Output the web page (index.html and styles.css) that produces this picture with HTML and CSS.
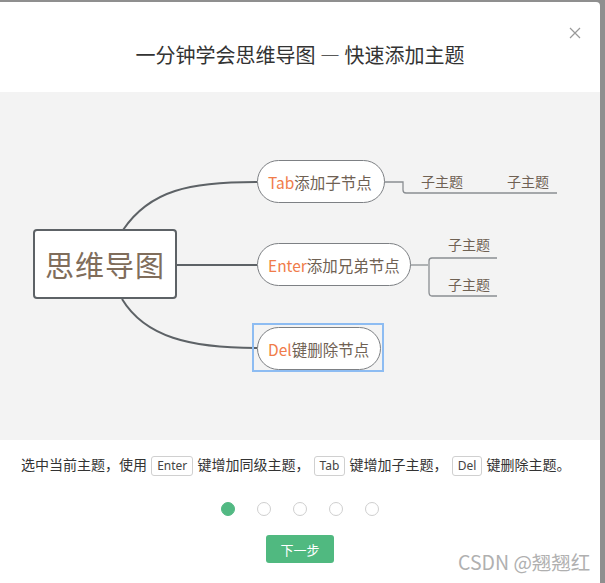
FILE: index.html
```html
<!DOCTYPE html>
<html lang="zh">
<head>
<meta charset="utf-8">
<link rel="stylesheet" href="styles.css">
</head>
<body>
<div class="dialog">
  <div class="header">
    <h1 class="title">一分钟学会思维导图 — 快速添加主题</h1>
    <span class="close">
      <svg width="12" height="12" viewBox="0 0 12 12"><path d="M1 1L11 11M11 1L1 11" stroke="#999" stroke-width="1.2" fill="none"/></svg>
    </span>
  </div>
  <div class="stage">
    <svg class="links" width="600" height="348" viewBox="0 0 600 348">
      <g fill="none" stroke="#5d6266" stroke-width="2">
        <path d="M123 138 C 150 98, 190 90, 257 90"/>
        <path d="M177 173 L257 173"/>
        <path d="M122 207 C 145 245, 190 256, 257 256"/>
      </g>
      <g fill="none" stroke="#8a8e92" stroke-width="1.3">
        <path d="M384 90 L403 90 L403 98 Q403 101 406 101 L557 101"/>
        <path d="M410 173 L428 173"/>
        <path d="M497 166 L432 166 Q429 166 429 169 L429 200 Q429 204 432 204 L497 204"/>
      </g>
    </svg>
    <div class="root">思维导图</div>
    <div class="node n1"><span class="key">Tab</span>添加子节点</div>
    <div class="node n2"><span class="key">Enter</span>添加兄弟节点</div>
    <div class="sel"></div>
    <div class="node n3"><span class="key">Del</span>键删除节点</div>
    <div class="sub s1">子主题</div>
    <div class="sub s2">子主题</div>
    <div class="sub s3">子主题</div>
    <div class="sub s4">子主题</div>
  </div>
  <p class="desc">选中当前主题，使用 <kbd>Enter</kbd> 键增加同级主题， <kbd>Tab</kbd> 键增加子主题， <kbd>Del</kbd> 键删除主题。</p>
  <div class="dots">
    <span class="dot active"></span><span class="dot"></span><span class="dot"></span><span class="dot"></span><span class="dot"></span>
  </div>
  <div class="actions"><button class="next">下一步</button></div>
  <div class="watermark">CSDN @翘翘红</div>
</div>
</body>
</html>
```
FILE: styles.css
```css
html, body {
  margin: 0;
  padding: 0;
  background: #8f8f8f;
  height: 583px;
  overflow: hidden;
  font-family: "Noto Sans CJK SC", "Noto Sans", sans-serif;
}
.dialog {
  position: relative;
  margin-top: 2px;
  width: 600px;
  height: 600px;
  background: #fff;
  border-top-right-radius: 4px;
}
.header {
  position: relative;
  height: 90px;
  display: flex;
  justify-content: center;
}
.title {
  margin: 40px 0 0;
  font-size: 20px;
  font-weight: normal;
  color: #333;
  line-height: 26px;
}
.close {
  position: absolute;
  right: 19px;
  top: 25px;
  width: 12px;
  height: 12px;
  display: block;
}
.close svg { display: block; }
.stage {
  position: relative;
  height: 348px;
  background: #f3f3f3;
}
.links { position: absolute; left: 0; top: 0; }
.root {
  position: absolute;
  left: 33px;
  top: 137px;
  width: 140px;
  height: 66px;
  border: 2px solid #5d6266;
  border-radius: 4px;
  background: #fff;
  color: #806d5b;
  font-size: 29px;
  display: flex;
  align-items: center;
  justify-content: center;
  letter-spacing: 1px;
}
.node {
  position: absolute;
  left: 257px;
  height: 41px;
  border: 1px solid #7d8084;
  border-radius: 22px;
  background: #fff;
  color: #6f6153;
  font-size: 15.5px;
  display: flex;
  align-items: center;
  padding: 0 10px;
  box-sizing: content-box;
  white-space: nowrap;
}
.key { color: #f07c4a; }
.n1 { top: 68px; width: 106px; }
.n2 { top: 151px; width: 132px; }
.n3 { top: 235px; width: 102px; }
.sel {
  position: absolute;
  left: 252px;
  top: 231px;
  width: 128px;
  height: 45px;
  border: 2px solid #8dbcf2;
}
.sub {
  position: absolute;
  font-size: 14px;
  color: #6f6153;
  line-height: 16px;
}
.s1 { left: 421px; top: 81px; }
.s2 { left: 507px; top: 81px; }
.s3 { left: 448px; top: 144px; }
.s4 { left: 448px; top: 184px; }
.desc {
  margin: 14px 0 0 21px;
  font-size: 14px;
  color: #333;
  line-height: 20px;
  white-space: nowrap;
}
kbd {
  display: inline-block;
  font-family: "Noto Sans", sans-serif;
  font-size: 12px;
  border: 1px solid #d0d0d0;
  border-radius: 3px;
  padding: 0 5px;
  margin: 0 1px;
  line-height: 18px;
  color: #444;
}
.dots {
  display: flex;
  justify-content: center;
  gap: 22px;
  margin-top: 26px;
}
.dot {
  width: 12px;
  height: 12px;
  border-radius: 50%;
  border: 1px solid #cfcfcf;
  background: #fff;
}
.dot.active { background: #52b983; border-color: #52b983; }
.actions {
  display: flex;
  justify-content: center;
  margin-top: 19px;
}
.next {
  width: 68px;
  height: 28px;
  border: none;
  border-radius: 3px;
  background: #50b980;
  color: #fff;
  font-family: "Noto Sans CJK SC", sans-serif;
  font-size: 13px;
  padding: 0;
}
.watermark {
  position: absolute;
  left: 458px;
  top: 547px;
  font-size: 19.5px;
  color: #b0b0b0;
  font-family: "Noto Sans CJK SC", sans-serif;
  line-height: 26px;
}
```
